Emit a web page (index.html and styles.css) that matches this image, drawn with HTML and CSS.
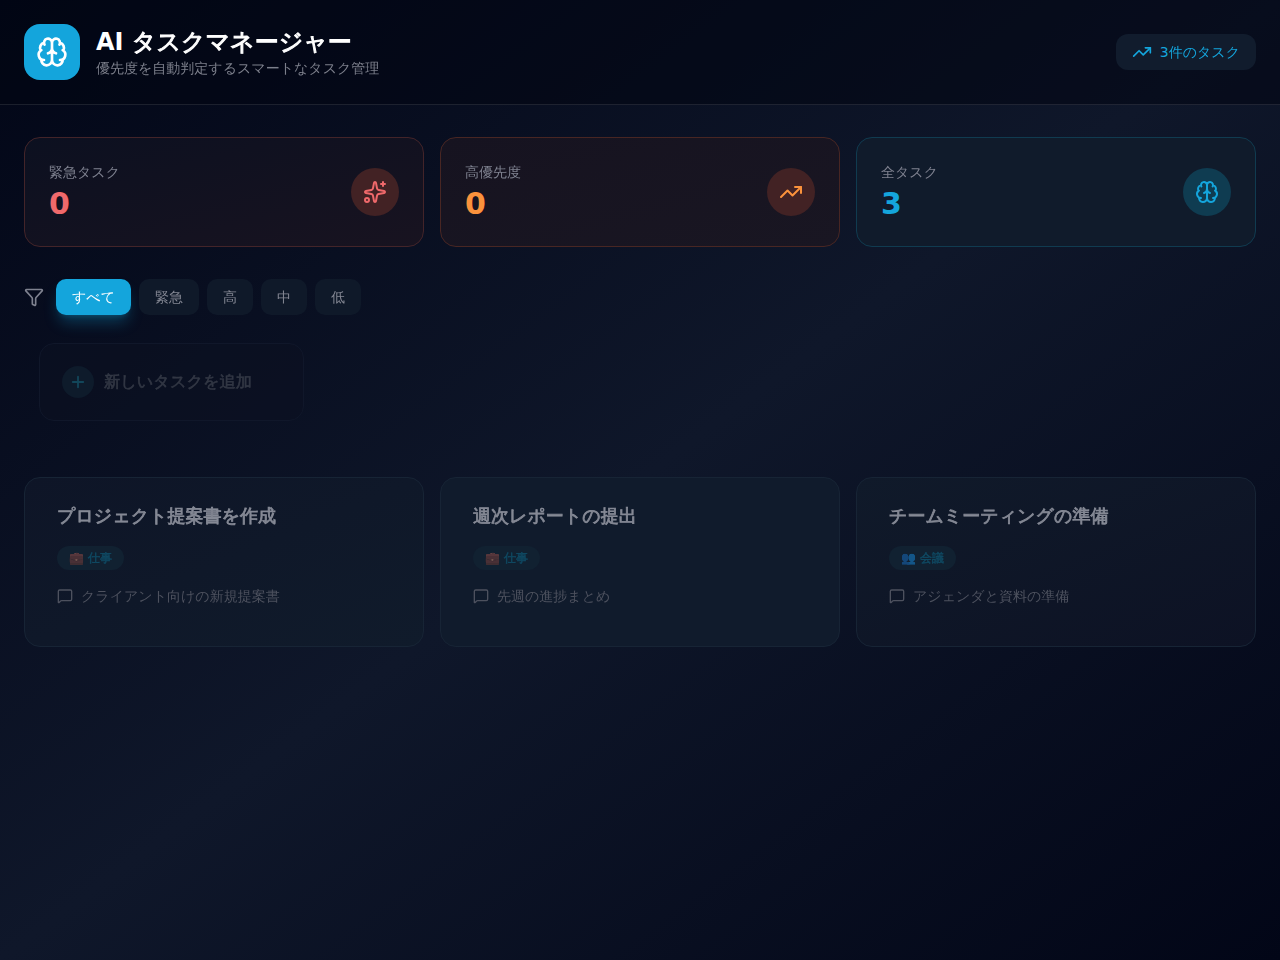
FILE: index.html
```html
<!DOCTYPE html>
<html lang="ja">
<head>
<meta charset="utf-8">
<title>AI タスクマネージャー</title>
<link rel="stylesheet" href="styles.css">
</head>
<body>
<svg class="sprite" aria-hidden="true">
  <symbol id="brain" viewBox="0 0 24 24"><path d="M12 18V5M15 13a4.17 4.17 0 0 1-3-4 4.17 4.17 0 0 1-3 4M17.598 6.5A3 3 0 1 0 12 5a3 3 0 1 0-5.598 1.5M17.997 5.125a4 4 0 0 1 2.526 5.77M18 18a4 4 0 0 0 2-7.464M19.967 17.483A4 4 0 1 1 12 18a4 4 0 1 1-7.967-.517M6 18a4 4 0 0 1-2-7.464M6.003 5.125a4 4 0 0 0-2.526 5.77"/></symbol>
  <symbol id="trend" viewBox="0 0 24 24"><path d="M16 7h6v6"/><path d="m22 7-8.5 8.5-5-5L2 17"/></symbol>
  <symbol id="sparkles" viewBox="0 0 24 24"><path d="M11.017 2.814a1 1 0 0 1 1.966 0l1.051 5.558a2 2 0 0 0 1.594 1.594l5.558 1.051a1 1 0 0 1 0 1.966l-5.558 1.051a2 2 0 0 0-1.594 1.594l-1.051 5.558a1 1 0 0 1-1.966 0l-1.051-5.558a2 2 0 0 0-1.594-1.594l-5.558-1.051a1 1 0 0 1 0-1.966l5.558-1.051a2 2 0 0 0 1.594-1.594zM20 2v4M22 4h-4"/><circle cx="4" cy="20" r="2"/></symbol>
  <symbol id="funnel" viewBox="0 0 24 24"><path d="M10 20a1 1 0 0 0 .553.895l2 1A1 1 0 0 0 14 21v-7a2 2 0 0 1 .517-1.341L21.74 4.67A1 1 0 0 0 21 3H3a1 1 0 0 0-.742 1.67l7.225 7.989A2 2 0 0 1 10 14z"/></symbol>
  <symbol id="plus" viewBox="0 0 24 24"><path d="M5 12h14M12 5v14"/></symbol>
  <symbol id="message" viewBox="0 0 24 24"><path d="M22 17a2 2 0 0 1-2 2H6.828a2 2 0 0 0-1.414.586l-2.202 2.202A.71.71 0 0 1 2 21.286V5a2 2 0 0 1 2-2h16a2 2 0 0 1 2 2z"/></symbol>
</svg>
<header class="header">
  <div class="brand">
    <div class="logo"><svg class="icon icon-xl"><use href="#brain"/></svg></div>
    <div>
      <h1 class="title">AI <span class="title-ja">タスクマネージャー</span></h1>
      <p class="subtitle">優先度を自動判定するスマートなタスク管理</p>
    </div>
  </div>
  <div class="count"><svg class="icon icon-md"><use href="#trend"/></svg><span>3件のタスク</span></div>
</header>
<main class="main">
  <section class="stats">
    <div class="stat urgent"><div><p class="label">緊急タスク</p><p class="value">0</p></div><div class="badge"><svg class="icon icon-lg"><use href="#sparkles"/></svg></div></div>
    <div class="stat high"><div><p class="label">高優先度</p><p class="value">0</p></div><div class="badge"><svg class="icon icon-lg"><use href="#trend"/></svg></div></div>
    <div class="stat all"><div><p class="label">全タスク</p><p class="value">3</p></div><div class="badge"><svg class="icon icon-lg"><use href="#brain"/></svg></div></div>
  </section>
  <nav class="filters">
    <svg class="icon icon-md filter-icon"><use href="#funnel"/></svg>
    <button class="filter active">すべて</button>
    <button class="filter">緊急</button>
    <button class="filter">高</button>
    <button class="filter">中</button>
    <button class="filter">低</button>
  </nav>
  <button class="add"><span class="add-icon"><svg class="icon icon-add"><use href="#plus"/></svg></span><span class="add-text">新しいタスクを追加</span></button>
  <section class="tasks">
    <article class="task">
      <h2 class="task-title">プロジェクト提案書を作成</h2>
      <span class="tag"><span class="emoji">💼</span><span>仕事</span></span>
      <p class="note"><svg class="icon icon-sm"><use href="#message"/></svg><span>クライアント向けの新規提案書</span></p>
    </article>
    <article class="task">
      <h2 class="task-title">週次レポートの提出</h2>
      <span class="tag"><span class="emoji">💼</span><span>仕事</span></span>
      <p class="note"><svg class="icon icon-sm"><use href="#message"/></svg><span>先週の進捗まとめ</span></p>
    </article>
    <article class="task">
      <h2 class="task-title">チームミーティングの準備</h2>
      <span class="tag"><span class="emoji people">👥</span><span>会議</span></span>
      <p class="note"><svg class="icon icon-sm"><use href="#message"/></svg><span>アジェンダと資料の準備</span></p>
    </article>
  </section>
</main>
</body>
</html>
```
FILE: styles.css
```css
* { box-sizing: border-box; margin: 0; padding: 0; }
body {
  min-height: 960px;
  background: linear-gradient(to bottom right, #020617, #0f172a, #020617);
  color: #fff;
  font-family: "DejaVu Sans", "WenQuanYi Zen Hei", "Noto Sans CJK JP", sans-serif;
  font-size: 14px;
  line-height: 20px;
}
.sprite { position: absolute; width: 0; height: 0; }
.icon { flex: none; fill: none; stroke: currentColor; stroke-width: 2; stroke-linecap: round; stroke-linejoin: round; }
.icon-sm { width: 16px; height: 16px; }
.icon-add { width: 18px; height: 18px; stroke-width: 2.4; }
.icon-md { width: 20px; height: 20px; }
.icon-lg { width: 24px; height: 24px; }
.icon-xl { width: 32px; height: 32px; }

.header {
  display: flex; align-items: center; justify-content: space-between;
  height: 105px; padding: 0 24px;
  background: rgba(2, 6, 19, .55);
  border-bottom: 1px solid rgba(255, 255, 255, .1);
}
.brand { display: flex; align-items: center; gap: 16px; }
.logo { display: grid; place-items: center; width: 56px; height: 56px; border-radius: 16px; background: #14a5dc; }
.title { font-size: 24px; line-height: 32px; font-weight: 700; }
.title-ja { -webkit-text-stroke: 1px currentColor; }
.subtitle { color: #7c7f8b; }
.count {
  display: flex; align-items: center; gap: 8px;
  height: 36px; padding: 0 16px; border-radius: 12px;
  background: #111c2d; color: #14a5dc;
}

.main { padding: 32px 24px; }
.stats, .tasks { display: grid; grid-template-columns: repeat(3, 1fr); gap: 16px; }
.stat {
  display: flex; align-items: center; justify-content: space-between;
  height: 110px; padding: 24px; border: 1px solid; border-radius: 16px;
}
.label { color: #7f8290; }
.value { margin-top: 4px; font-size: 30px; line-height: 36px; font-weight: 700; }
.badge { display: grid; place-items: center; width: 48px; height: 48px; border-radius: 50%; }
.urgent { background: linear-gradient(to bottom right, #0c1020, #181320); border-color: #432429; }
.urgent .value, .urgent .badge { color: #f0696b; }
.high { background: linear-gradient(to bottom right, #161320, #191622); border-color: #482623; }
.high .value, .high .badge { color: #fb923c; }
.urgent .badge, .high .badge { background: #422224; }
.all { background: #101b2b; border-color: #103b50; }
.all .value, .all .badge { color: #14a5dc; }
.all .badge { background: #0f3c51; }

.filters { display: flex; align-items: center; gap: 8px; margin-top: 32px; }
.filter-icon { margin-right: 4px; color: #7f8290; }
.filter {
  height: 36px; padding: 0 16px; border: 0; border-radius: 10px;
  background: #0f1929; color: #858894; font: inherit;
}
.filter.active { background: #14a5dc; color: #fff; box-shadow: 0 10px 15px -3px rgba(20, 165, 220, .3), 0 4px 6px -4px rgba(20, 165, 220, .3); }

.add {
  display: flex; align-items: center; gap: 10px;
  width: 265px; height: 78px; margin: 28px 0 0 15px; padding: 0 22px;
  border: 1px solid #10172a; border-radius: 15px;
  background: rgba(11, 16, 34, .6); color: #323744;
  font: 500 16.2px/24px "DejaVu Sans", "WenQuanYi Zen Hei", "Noto Sans CJK JP", sans-serif;
}
.add-text { -webkit-text-stroke: .6px currentColor; }
.add-icon { display: grid; place-items: center; width: 32px; height: 32px; border-radius: 50%; background: #0e1b2b; color: #12465a; }

.tasks { margin-top: 56px; }
.task {
  height: 170px; padding: 24px 32px; border: 1px solid #172435; border-radius: 16px;
  background: linear-gradient(to bottom right, #0e1527, #101b2b);
}
.task:nth-child(2) { background: #101b2c; }
.task:nth-child(3) { background: linear-gradient(to bottom right, #101a2a, #0d1224); }
.task-title { font-size: 18px; line-height: 28px; font-weight: 600; color: #858995; -webkit-text-stroke: .8px currentColor; }
.tag {
  display: flex; align-items: center; gap: 4px; width: fit-content; height: 24px;
  margin-top: 16px; padding: 0 12px; border-radius: 12px;
  background: #112131; color: #0f4861; font-size: 12px; line-height: 16px; font-weight: 500;
  -webkit-text-stroke: .5px currentColor;
}
.emoji { opacity: .5; filter: hue-rotate(-18deg); }
.emoji.people { opacity: .45; filter: none; }
.note { display: flex; align-items: center; gap: 8px; margin-top: 16px; color: #4d515e; }
```
